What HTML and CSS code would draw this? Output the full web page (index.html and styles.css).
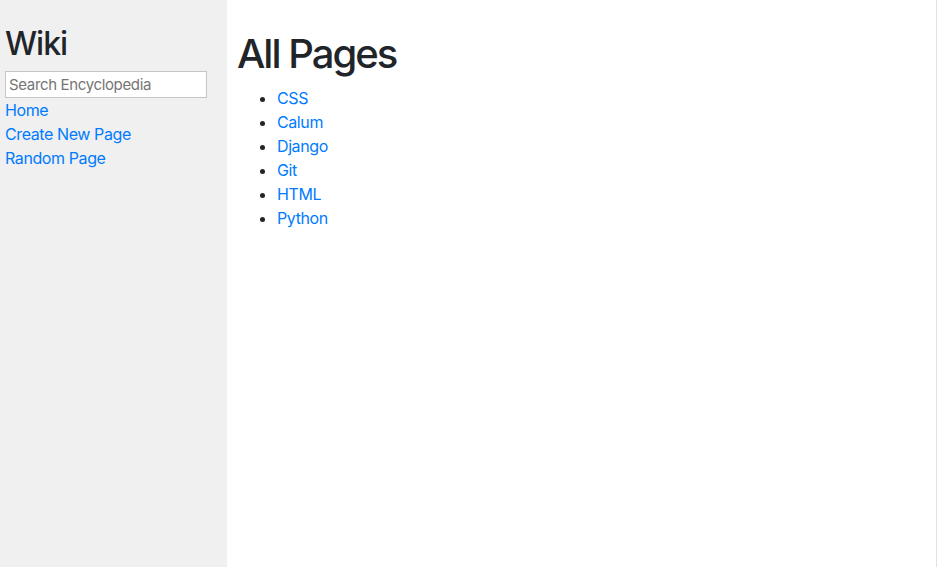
FILE: index.html
```
<!DOCTYPE html>
<html lang="en">
<head>
<meta charset="utf-8">
<title>Encyclopedia</title>
<link rel="stylesheet" href="styles.css">
</head>
<body>
<div class="row">
  <div class="sidebar">
    <h2 class="brand">Wiki</h2>
    <form class="search-form">
      <input class="search" type="text" name="q" placeholder="Search Encyclopedia">
    </form>
    <div class="nav-item"><a href="#">Home</a></div>
    <div class="nav-item"><a href="#">Create New Page</a></div>
    <div class="nav-item"><a href="#">Random Page</a></div>
  </div>
  <div class="main">
    <h1 class="title">All Pages</h1>
    <ul class="entries">
      <li><a href="#">CSS</a></li>
      <li><a href="#">Calum</a></li>
      <li><a href="#">Django</a></li>
      <li><a href="#">Git</a></li>
      <li><a href="#">HTML</a></li>
      <li><a href="#">Python</a></li>
    </ul>
  </div>
  <div class="edge"></div>
</div>
</body>
</html>
```
FILE: styles.css
```
* { box-sizing: border-box; }
html, body { height: 100%; }
body {
  margin: 0;
  background: #ffffff;
  color: #212529;
  font-family: Inter, "Liberation Sans", Arial, sans-serif;
  font-size: 16px;
  line-height: 1.5;
  letter-spacing: -0.4px;
}
a { color: #007bff; text-decoration: none; }
.row { display: flex; height: 100vh; }
.sidebar {
  width: 227px;
  flex: none;
  background: #f0f0f0;
  padding: 20px 20px 20px 5px;
}
.brand {
  margin: 5px 0 8px;
  font-size: 32px;
  font-weight: 500;
  line-height: 1.2;
  letter-spacing: -1px;
}
.search-form { margin: 0; }
.search {
  display: block;
  width: 202px;
  height: 27px;
  margin: 0;
  padding: 1px 3px;
  border: 1px solid #c6c6c6;
  background: #ffffff;
  font-family: inherit;
  font-size: 15px;
  letter-spacing: -0.35px;
  color: #212529;
  outline: none;
}
.search::placeholder { color: #757575; }
.main { flex: 1; padding: 10px; }
.title {
  margin: 0 0 8px;
  padding-top: 20px;
  font-size: 40px;
  font-weight: 500;
  line-height: 1.2;
  letter-spacing: -2px;
}
.entries { margin: 0; padding-left: 40px; }
.entries li { line-height: 24px; }
.edge { width: 1px; flex: none; background: #e2e2e2; margin-right: 1px; }
```
